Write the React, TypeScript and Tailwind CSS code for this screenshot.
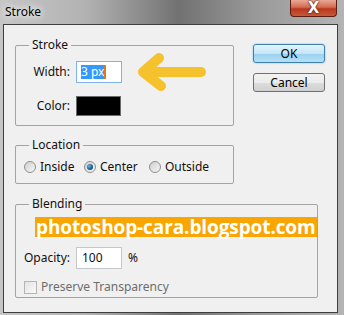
import React from "react";

function Radio({ checked, label }: { checked?: boolean; label: string }) {
  return (
    <div className="flex items-center gap-[4px]">
      <span className="flex h-[12px] w-[12px] items-center justify-center rounded-full border border-[#8f8f8f] bg-[linear-gradient(135deg,#cfcfcf,#f7f7f7)]">
        {checked && (
          <span className="h-[6px] w-[6px] rounded-full bg-[radial-gradient(circle_at_35%_35%,#6fb4e8,#145f99_55%,#0b3a63)]" />
        )}
      </span>
      <span>{label}</span>
    </div>
  );
}

function Arrow() {
  return (
    <svg width="72" height="38" viewBox="0 0 72 38" className="-my-[8px] ml-[13px]">
      <g stroke="#f5c22e" strokeWidth="10" strokeLinecap="round" strokeLinejoin="round" fill="none">
        <path d="M 66 19 H 10" />
        <path d="M 24 5 L 8 19 L 26 33" />
      </g>
    </svg>
  );
}

export default function App() {
  return (
    <div className="h-[315px] w-[344px] overflow-hidden bg-[linear-gradient(90deg,#c6c6c6_0%,#b2b2b2_25%,#727272_52%,#9a9a9a_75%,#b4b4b4_100%)] pb-[2px] pl-[3px] pr-[6px] font-['Noto_Sans',sans-serif] text-[12px] leading-[16px] text-[#111]">
      <div className="flex h-[24px] items-start justify-between">
        <span className="mt-[4px] pl-[2px] text-[12px] text-black [text-shadow:0_0_6px_#fff,0_0_10px_#fff]">
          Stroke
        </span>
        <div className="mr-[1px] flex h-[17px] w-[47px] items-center justify-center rounded-b-[4px] border border-t-0 border-[#5a1f12] bg-[linear-gradient(180deg,#e9a996_0%,#d46a52_45%,#b8391d_55%,#c9583a_100%)]">
          <span className="font-['DejaVu_Sans',sans-serif] text-[15px] font-bold leading-none text-white [text-shadow:0_0_1px_#3a1108,0_0_2px_#3a1108]">
            X
          </span>
        </div>
      </div>

      <div className="flex h-[289px] border border-[#3e3e3e] bg-[#f0f0f0] pl-[11px] pt-[12px]">
        <div className="flex w-[219px] flex-col">
          <fieldset className="h-[89px] rounded-[2px] border border-[#a3a3a3]">
            <legend className="ml-[13px] px-[3px]">Stroke</legend>
            <div className="mt-[8px] flex items-center">
              <span className="w-[55px] pr-[1px] text-right">Width:</span>
              <div className="ml-[5px] flex h-[22px] w-[46px] items-center border border-[#7eb4ea] bg-white pl-[4px]">
                <span className="bg-[#3399ff] leading-[14px] text-white">3 px</span>
                <span className="h-[14px] w-[2px] bg-[#e8741b]" />
              </div>
              <Arrow />
            </div>
            <div className="mt-[13px] flex items-center">
              <span className="w-[55px] pr-[1px] text-right">Color:</span>
              <div className="ml-[5px] h-[20px] w-[45px] border border-[#6b6b6b] bg-black" />
            </div>
          </fieldset>

          <fieldset className="mt-[11px] h-[47px] rounded-[2px] border border-[#a3a3a3]">
            <legend className="ml-[13px] px-[3px]">Location</legend>
            <div className="mt-[6px] flex items-center pl-[8px]">
              <div className="w-[60px]">
                <Radio label="Inside" />
              </div>
              <div className="w-[65px]">
                <Radio checked label="Center" />
              </div>
              <Radio label="Outside" />
            </div>
          </fieldset>

          <fieldset className="mt-[12px] h-[102px] rounded-[2px] border border-[#a3a3a3]">
            <legend className="ml-[13px] px-[3px]">Blending</legend>
            <div className="ml-[19px] mt-[5px] flex h-[20px] w-fit items-center whitespace-nowrap bg-[#f9a602] px-[1px] font-['Open_Sans',sans-serif] text-[19px] font-bold leading-none tracking-[-0.1px] text-white">
              photoshop-cara.blogspot.com
            </div>
            <div className="mt-[10px] flex items-center">
              <span className="w-[55px] pr-[1px] text-right">Opacity:</span>
              <div className="ml-[5px] flex h-[22px] w-[46px] items-center border border-[#c5c7cc] bg-white pl-[5px]">
                100
              </div>
              <span className="ml-[6px]">%</span>
            </div>
            <div className="ml-[8px] mt-[10px] flex items-center gap-[4px] text-[#6d6d6d]">
              <span className="h-[13px] w-[13px] border border-[#b5b5b5] bg-[linear-gradient(135deg,#e2e2e2,#fbfbfb)]" />
              <span>Preserve Transparency</span>
            </div>
          </fieldset>
        </div>

        <div className="ml-[19px] flex flex-col gap-[10px] pt-[7px]">
          <button className="h-[19px] w-[72px] rounded-[3px] border border-[#3c7fb1] bg-[linear-gradient(180deg,#e5f4fc_0%,#c4e5f6_50%,#98d1ef_51%,#b7e0f5_100%)] leading-none text-black shadow-[0_0_2px_#6cc0ee]">
            OK
          </button>
          <button className="h-[19px] w-[72px] rounded-[3px] border border-[#707070] bg-[linear-gradient(180deg,#f2f2f2_0%,#ebebeb_50%,#dddddd_51%,#cfcfcf_100%)] leading-none text-black">
            Cancel
          </button>
        </div>
      </div>
    </div>
  );
}
